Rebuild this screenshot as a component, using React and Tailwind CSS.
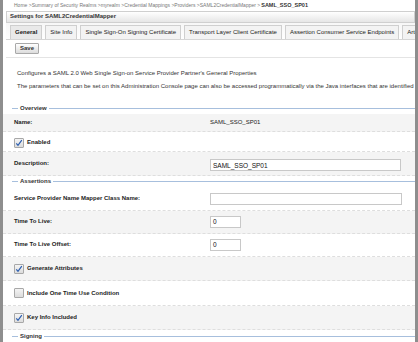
const font = "font-['Liberation_Sans','Arial',sans-serif]";

const Check = ({ checked }) => (
  <div className="w-[10px] h-[10px] shrink-0 rounded-[1px] border border-[#a8a8a8] bg-gradient-to-b from-[#f4f4f4] to-[#dcdcdc] flex items-center justify-center">
    {checked && (
      <svg width="8" height="8" viewBox="0 0 8 8">
        <path d="M1.3 4.3 L3 6.3 L6.8 1.2" fill="none" stroke="#2a5db0" strokeWidth="1.2" />
      </svg>
    )}
  </div>
);

const Section = ({ title }) => (
  <div className="flex items-center h-[12px] pl-[9px]">
    <div className="w-[6px] h-px bg-[#a7bfdd]" />
    <span className="px-[2px] text-[6px] font-bold text-[#333]">{title}</span>
    <div className="flex-1 h-px bg-[#a7bfdd]" />
  </div>
);

const Row = ({ gray, h, children }) => (
  <div
    className={`flex items-center pl-[11px] border-b border-dashed border-[#dedede] ${
      gray ? "bg-[#f4f4f4]" : "bg-white"
    }`}
    style={{ height: h }}
  >
    {children}
  </div>
);

const Label = ({ children }) => (
  <div className="w-[196px] shrink-0 text-[6px] font-bold text-[#222]">{children}</div>
);

const Input = ({ w, value }) => (
  <div
    className="h-[12px] border border-[#c8c8c8] bg-white flex items-center px-[2px] text-[6.5px] text-[#111]"
    style={{ width: w }}
  >
    {value}
  </div>
);

const tabs = [
  "General",
  "Site Info",
  "Single Sign-On Signing Certificate",
  "Transport Layer Client Certificate",
  "Assertion Consumer Service Endpoints",
  "Artifact Resolution Endpoints",
];

export default function App() {
  return (
    <div className={`w-[418px] h-[342px] overflow-hidden bg-white flex ${font}`}>
      <div className="w-[3px] shrink-0 bg-[#8e8e8e]" />
      <div className="flex-1 min-w-0 flex flex-col">
        {/* breadcrumb */}
        <div className="h-[11px] pl-[11px] flex items-center whitespace-nowrap text-[5px] text-[#777]">
          Home &gt;Summary of Security Realms &gt;myrealm &gt;Credential Mappings &gt;Providers
          &gt;SAML2CredentialMapper &gt;<span className="font-bold text-[5.5px] text-[#333] ml-[1px]">SAML_SSO_SP01</span>
        </div>

        <div className="ml-[3px] h-[13px] border border-[#cfcfcf] bg-gradient-to-b from-white to-[#e6e6e6] flex items-center pl-[3px] text-[6px] font-bold text-[#333]">
          Settings for SAML2CredentialMapper
        </div>

        {/* tabs */}
        <div className="ml-[3px] h-[17px] flex items-end gap-[3px] pl-[4px] border-b border-[#d6d6d6] bg-gradient-to-b from-[#f7f7f7] to-white overflow-hidden whitespace-nowrap">
          {tabs.map((t, i) => (
            <div
              key={t}
              className={`h-[14px] px-[4px] flex items-center text-[6px] border border-b-0 border-[#cfcfcf] ${
                i === 0 ? "font-bold text-[#222] bg-[#e9e9e9]" : "text-[#222] bg-[#f3f3f3]"
              }`}
            >
              {t}
            </div>
          ))}
        </div>

        <div className="h-[19px] pl-[9px] flex items-center border-b border-[#e4e4e4] ml-[3px]">
          <div className="h-[11px] w-[24px] border border-[#a9a9a9] rounded-[1px] bg-gradient-to-b from-white to-[#dcdcdc] flex items-center justify-center text-[6px] font-bold text-[#333]">
            Save
          </div>
        </div>

        <div className="pl-[14px] pt-[9px] text-[6px] text-[#333] whitespace-nowrap leading-[13px]">
          <div>Configures a SAML 2.0 Web Single Sign-on Service Provider Partner's General Properties</div>
          <div>
            The parameters that can be set on this Administration Console page can also be accessed programmatically via
            the Java interfaces that are identified in the help
          </div>
        </div>

        <div className="h-[10px]" />
        <Section title="Overview" />
        <Row gray h={18}>
          <Label>Name:</Label>
          <span className="text-[6px] text-[#222]">SAML_SSO_SP01</span>
        </Row>
        <Row h={21}>
          <div className="flex items-center gap-[3px] pt-[3px]">
            <Check checked />
            <span className="text-[6px] font-bold text-[#222]">Enabled</span>
          </div>
        </Row>
        <Row gray h={25}>
          <Label>Description:</Label>
          <div className="pt-[4px]">
            <Input w={191} value="SAML_SSO_SP01" />
          </div>
        </Row>

        <Section title="Assertions" />
        <Row h={24}>
          <Label>Service Provider Name Mapper Class Name:</Label>
          <Input w={192} value="" />
        </Row>
        <Row gray h={24}>
          <Label>Time To Live:</Label>
          <Input w={31} value="0" />
        </Row>
        <Row h={24}>
          <Label>Time To Live Offset:</Label>
          <Input w={31} value="0" />
        </Row>
        <Row gray h={25}>
          <div className="flex items-center gap-[3px]">
            <Check checked />
            <span className="text-[6px] font-bold text-[#222]">Generate Attributes</span>
          </div>
        </Row>
        <Row h={26}>
          <div className="flex items-center gap-[3px]">
            <Check />
            <span className="text-[6px] font-bold text-[#222]">Include One Time Use Condition</span>
          </div>
        </Row>
        <Row gray h={25}>
          <div className="flex items-center gap-[3px]">
            <Check checked />
            <span className="text-[6px] font-bold text-[#222]">Key Info Included</span>
          </div>
        </Row>
        <Section title="Signing" />
      </div>
      <div className="w-[3px] shrink-0 bg-[#8e8e8e]" />
    </div>
  );
}
